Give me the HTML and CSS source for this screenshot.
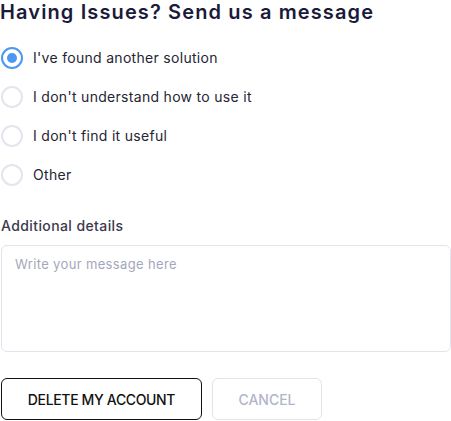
FILE: index.html
```html
<!DOCTYPE html>
<html lang="en">
<head>
<meta charset="utf-8">
<title>Having Issues?</title>
<link rel="stylesheet" href="styles.css">
</head>
<body>
<form class="form">
  <h1 class="title">Having Issues? Send us a message</h1>
  <div class="options">
    <label class="option">
      <input type="radio" name="reason" class="radio" checked>
      <span class="radio-ui"></span>
      <span class="option-text">I've found another solution</span>
    </label>
    <label class="option">
      <input type="radio" name="reason" class="radio">
      <span class="radio-ui"></span>
      <span class="option-text">I don't understand how to use it</span>
    </label>
    <label class="option">
      <input type="radio" name="reason" class="radio">
      <span class="radio-ui"></span>
      <span class="option-text">I don't find it useful</span>
    </label>
    <label class="option">
      <input type="radio" name="reason" class="radio">
      <span class="radio-ui"></span>
      <span class="option-text">Other</span>
    </label>
  </div>
  <label class="field-label" for="details">Additional details</label>
  <textarea id="details" class="details" placeholder="Write your message here"></textarea>
  <div class="actions">
    <button type="button" class="btn btn-delete">DELETE MY ACCOUNT</button>
    <button type="button" class="btn btn-cancel">CANCEL</button>
  </div>
</form>
</body>
</html>
```
FILE: styles.css
```css
* { box-sizing: border-box; }
html, body { margin: 0; padding: 0; background: #fff; }
body {
  font-family: Inter, "Noto Sans", "Liberation Sans", sans-serif;
  color: #2b2b3a;
}
.form {
  display: flex;
  flex-direction: column;
  padding-left: 1px;
  width: 451px;
}
.title {
  margin: 0 0 14px -1px;
  font-size: 20px;
  line-height: 24px;
  font-weight: 600;
  color: #1a1b3a;
  letter-spacing: 1.12px;
  white-space: nowrap;
}
.options {
  display: flex;
  flex-direction: column;
}
.option {
  display: flex;
  align-items: center;
  height: 39px;
  cursor: pointer;
}
.radio {
  position: absolute;
  opacity: 0;
  width: 0;
  height: 0;
  margin: 0;
}
.radio-ui {
  width: 22px;
  height: 22px;
  border-radius: 50%;
  border: 2px solid #e4e4ef;
  display: flex;
  align-items: center;
  justify-content: center;
  flex-shrink: 0;
}
.radio:checked + .radio-ui { border-color: #4b97f2; }
.radio:checked + .radio-ui::after {
  content: "";
  width: 10px;
  height: 10px;
  border-radius: 50%;
  background: #4b97f2;
}
.option-text {
  margin-left: 10px;
  font-size: 14px;
  line-height: 20px;
  letter-spacing: 0.3px;
  color: #252533;
}
.field-label {
  margin-top: 22px;
  font-size: 14px;
  line-height: 20px;
  font-weight: 500;
  letter-spacing: 0.4px;
  color: #3a3a4c;
}
.details {
  margin-top: 9px;
  width: 450px;
  height: 107px;
  border: 1px solid #e3e3ee;
  border-radius: 6px;
  padding: 8px 13px;
  font-family: inherit;
  font-size: 13px;
  line-height: 20px;
  letter-spacing: 0.35px;
  color: #2b2b38;
  resize: none;
  outline: none;
}
.details::placeholder { color: #a4a7bb; }
.actions {
  display: flex;
  gap: 10px;
  margin-top: 26px;
}
.btn {
  height: 42px;
  border-radius: 6px;
  background: #fff;
  font-family: inherit;
  font-size: 14px;
  font-weight: 500;
  padding: 0;
  cursor: pointer;
}
.btn-delete {
  width: 201px;
  border: 1px solid #111;
  color: #111;
  letter-spacing: -0.35px;
}
.btn-cancel {
  width: 110px;
  border: 1px solid #e3e3ee;
  color: #b2b5c8;
}
```
